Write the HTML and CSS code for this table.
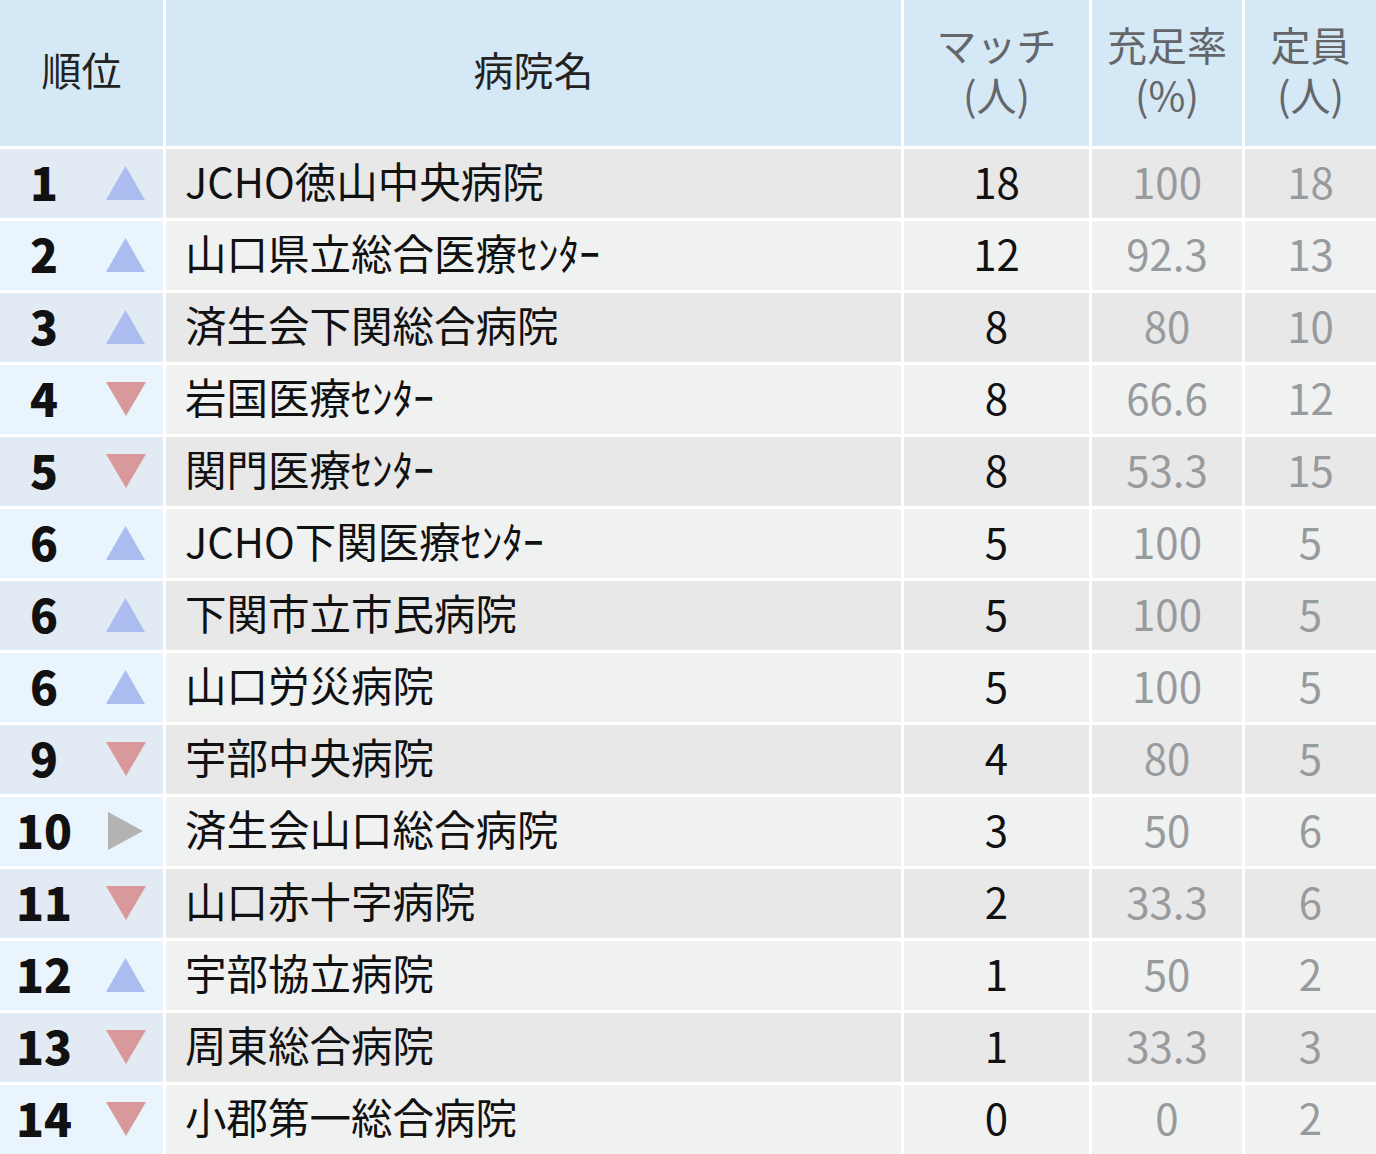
FILE: index.html
```html
<!DOCTYPE html>
<html lang="ja">
<head>
<meta charset="utf-8">
<title>マッチ順位</title>
<link rel="stylesheet" href="styles.css">
</head>
<body>
<div class="table">
  <div class="row head">
    <div class="cell h-rank">順位</div>
    <div class="cell h-name">病院名</div>
    <div class="cell h-sub">マッチ<br>(人)</div>
    <div class="cell h-sub">充足率<br>(%)</div>
    <div class="cell h-sub">定員<br>(人)</div>
  </div>

  <div class="row odd">
    <div class="cell rank"><span class="num">1</span><span class="mark"><svg class="tri up" viewBox="0 0 39 34"><polygon points="0,34 19.5,0 39,34"/></svg></span></div>
    <div class="cell name">JCHO徳山中央病院</div>
    <div class="cell match">18</div><div class="cell gray">100</div><div class="cell gray">18</div>
  </div>
  <div class="row even">
    <div class="cell rank"><span class="num">2</span><span class="mark"><svg class="tri up" viewBox="0 0 39 34"><polygon points="0,34 19.5,0 39,34"/></svg></span></div>
    <div class="cell name">山口県立総合医療ｾﾝﾀｰ</div>
    <div class="cell match">12</div><div class="cell gray">92.3</div><div class="cell gray">13</div>
  </div>
  <div class="row odd">
    <div class="cell rank"><span class="num">3</span><span class="mark"><svg class="tri up" viewBox="0 0 39 34"><polygon points="0,34 19.5,0 39,34"/></svg></span></div>
    <div class="cell name">済生会下関総合病院</div>
    <div class="cell match">8</div><div class="cell gray">80</div><div class="cell gray">10</div>
  </div>
  <div class="row even">
    <div class="cell rank"><span class="num">4</span><span class="mark"><svg class="tri down" viewBox="0 0 40 34"><polygon points="0,0 40,0 20,34"/></svg></span></div>
    <div class="cell name">岩国医療ｾﾝﾀｰ</div>
    <div class="cell match">8</div><div class="cell gray">66.6</div><div class="cell gray">12</div>
  </div>
  <div class="row odd">
    <div class="cell rank"><span class="num">5</span><span class="mark"><svg class="tri down" viewBox="0 0 40 34"><polygon points="0,0 40,0 20,34"/></svg></span></div>
    <div class="cell name">関門医療ｾﾝﾀｰ</div>
    <div class="cell match">8</div><div class="cell gray">53.3</div><div class="cell gray">15</div>
  </div>
  <div class="row even">
    <div class="cell rank"><span class="num">6</span><span class="mark"><svg class="tri up" viewBox="0 0 39 34"><polygon points="0,34 19.5,0 39,34"/></svg></span></div>
    <div class="cell name">JCHO下関医療ｾﾝﾀｰ</div>
    <div class="cell match">5</div><div class="cell gray">100</div><div class="cell gray">5</div>
  </div>
  <div class="row odd">
    <div class="cell rank"><span class="num">6</span><span class="mark"><svg class="tri up" viewBox="0 0 39 34"><polygon points="0,34 19.5,0 39,34"/></svg></span></div>
    <div class="cell name">下関市立市民病院</div>
    <div class="cell match">5</div><div class="cell gray">100</div><div class="cell gray">5</div>
  </div>
  <div class="row even">
    <div class="cell rank"><span class="num">6</span><span class="mark"><svg class="tri up" viewBox="0 0 39 34"><polygon points="0,34 19.5,0 39,34"/></svg></span></div>
    <div class="cell name">山口労災病院</div>
    <div class="cell match">5</div><div class="cell gray">100</div><div class="cell gray">5</div>
  </div>
  <div class="row odd">
    <div class="cell rank"><span class="num">9</span><span class="mark"><svg class="tri down" viewBox="0 0 40 34"><polygon points="0,0 40,0 20,34"/></svg></span></div>
    <div class="cell name">宇部中央病院</div>
    <div class="cell match">4</div><div class="cell gray">80</div><div class="cell gray">5</div>
  </div>
  <div class="row even">
    <div class="cell rank"><span class="num">10</span><span class="mark"><svg class="tri right" viewBox="0 0 35 38"><polygon points="0,0 35,19 0,38"/></svg></span></div>
    <div class="cell name">済生会山口総合病院</div>
    <div class="cell match">3</div><div class="cell gray">50</div><div class="cell gray">6</div>
  </div>
  <div class="row odd">
    <div class="cell rank"><span class="num">11</span><span class="mark"><svg class="tri down" viewBox="0 0 40 34"><polygon points="0,0 40,0 20,34"/></svg></span></div>
    <div class="cell name">山口赤十字病院</div>
    <div class="cell match">2</div><div class="cell gray">33.3</div><div class="cell gray">6</div>
  </div>
  <div class="row even">
    <div class="cell rank"><span class="num">12</span><span class="mark"><svg class="tri up" viewBox="0 0 39 34"><polygon points="0,34 19.5,0 39,34"/></svg></span></div>
    <div class="cell name">宇部協立病院</div>
    <div class="cell match">1</div><div class="cell gray">50</div><div class="cell gray">2</div>
  </div>
  <div class="row odd">
    <div class="cell rank"><span class="num">13</span><span class="mark"><svg class="tri down" viewBox="0 0 40 34"><polygon points="0,0 40,0 20,34"/></svg></span></div>
    <div class="cell name">周東総合病院</div>
    <div class="cell match">1</div><div class="cell gray">33.3</div><div class="cell gray">3</div>
  </div>
  <div class="row even">
    <div class="cell rank"><span class="num">14</span><span class="mark"><svg class="tri down" viewBox="0 0 40 34"><polygon points="0,0 40,0 20,34"/></svg></span></div>
    <div class="cell name">小郡第一総合病院</div>
    <div class="cell match">0</div><div class="cell gray">0</div><div class="cell gray">2</div>
  </div>
</div>
</body>
</html>
```

FILE: styles.css
```css
html, body {
  margin: 0;
  padding: 0;
  background: #ffffff;
}

body {
  font-family: "Noto Sans CJK JP", "Noto Sans", sans-serif;
  color: #111111;
}

.table {
  width: 1376px;
  display: flex;
  flex-direction: column;
  gap: 3px;
}

.row {
  display: grid;
  grid-template-columns: 163px 735px 185px 150px 131px;
  column-gap: 3px;
  height: 69px;
}

.row.head {
  height: 146px;
}

.cell {
  display: flex;
  align-items: center;
  justify-content: center;
  font-size: 41.5px;
  line-height: 1;
  white-space: nowrap;
  box-sizing: border-box;
}

.head .cell {
  background: #d4e8f6;
  font-size: 40px;
  line-height: 50px;
  text-align: center;
  padding-bottom: 8px;
}

.h-rank, .h-name {
  color: #222222;
}

.h-sub {
  color: #646669;
}

.odd .cell { background: #e8e8e8; }
.even .cell { background: #f0f1f1; }
.odd .rank { background: #e2ebf3; }
.even .rank { background: #e9f4fc; }

.rank {
  justify-content: flex-start;
}

.num {
  width: 88px;
  text-align: center;
  font-weight: 900;
  font-size: 46px;
  color: #111111;
  padding-bottom: 6px;
}

.mark {
  width: 75px;
  display: flex;
  justify-content: center;
  align-items: center;
  padding-bottom: 2px;
}

.tri.up { width: 39px; height: 34px; fill: #abbdef; }
.tri.down { width: 40px; height: 34px; fill: #d9999c; }
.tri.right { width: 35px; height: 38px; fill: #b3b3b3; }

.name {
  justify-content: flex-start;
  padding-left: 19px;
  padding-bottom: 6px;
  color: #111111;
}

.match {
  color: #111111;
  font-size: 42px;
  padding-bottom: 6px;
}

.gray {
  color: #989b9e;
  font-size: 42px;
  padding-bottom: 6px;
}
```
